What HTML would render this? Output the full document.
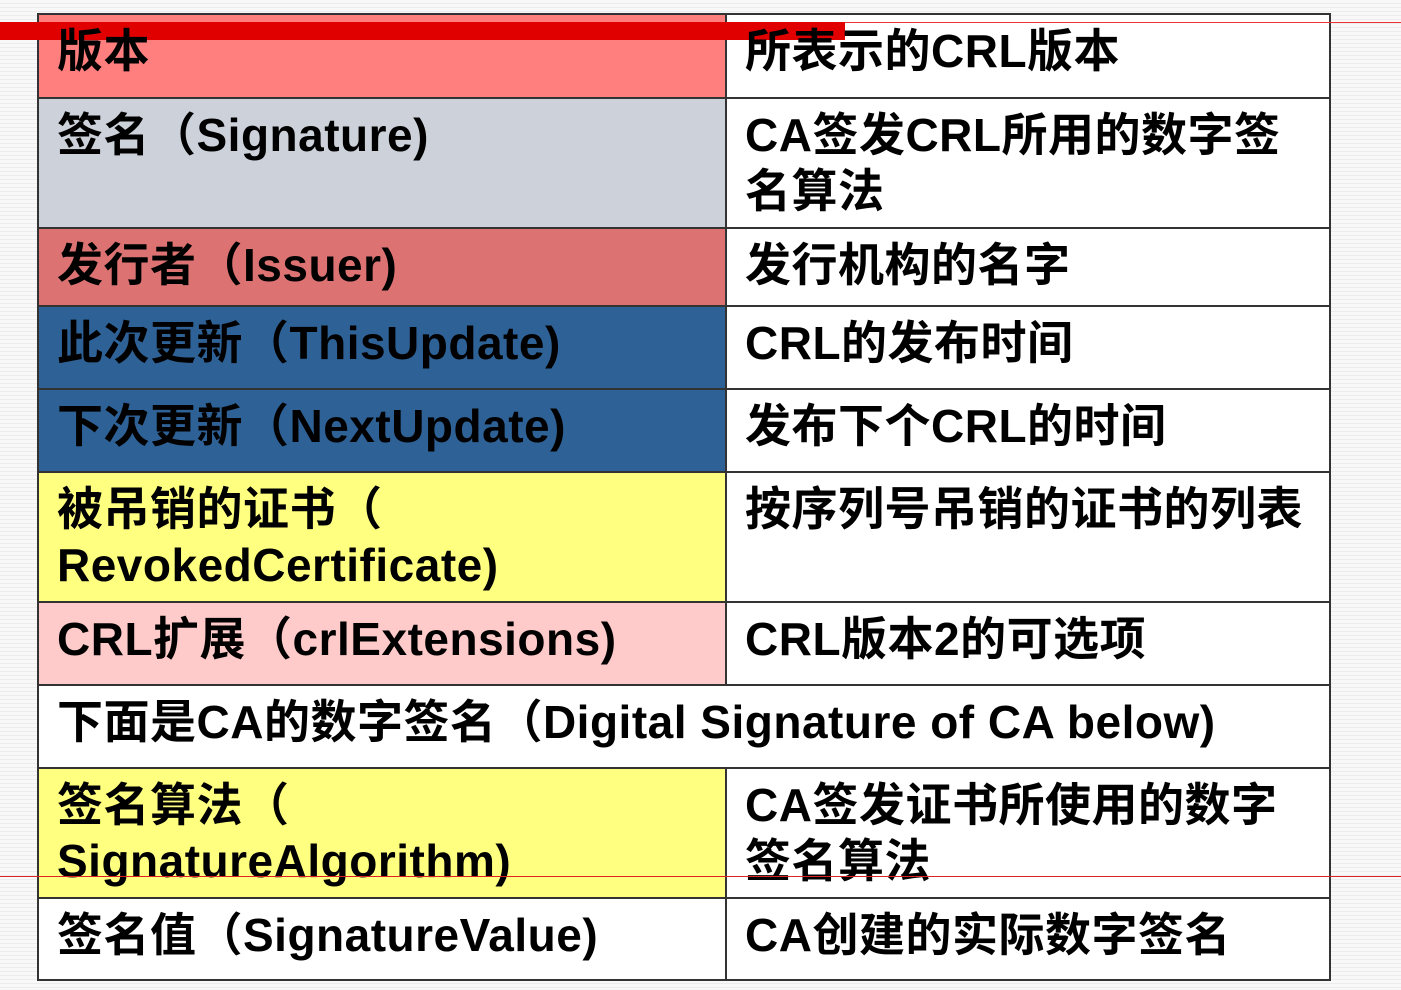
<!DOCTYPE html>
<html><head><meta charset="utf-8"><style>
body{margin:0;width:1401px;height:990px;background:#f5f5f5;position:relative;overflow:hidden;
background-image:repeating-linear-gradient(#f8f8f8 0 3px,#ececec 3px 4px);}
.c{position:absolute;box-sizing:border-box;font-family:"Liberation Sans","Noto Sans CJK SC",sans-serif;font-weight:bold;font-size:46px;line-height:56px;color:#000;padding:8px 0 0 18px;border:2px solid #333;letter-spacing:0.5px;white-space:nowrap}
.l{left:37px;width:690px}
.r{left:725px;width:606px;background:#fff}
</style></head><body>
<div class="c l" style="top:13px;height:86px;background:#ff7f7f"></div>
<div class="c r" style="top:13px;height:86px;background:#fff"></div>
<div style="position:absolute;left:0;top:22px;width:845px;height:18px;background:#e00000;z-index:2"></div>
<div style="position:absolute;left:845px;top:22px;width:556px;height:1px;background:#e33;z-index:2"></div>
<div class="c l" style="top:13px;height:86px;background:transparent;border-color:transparent;z-index:10">版本</div>
<div class="c r" style="top:13px;height:86px;background:transparent;border-color:transparent;z-index:10">所表示的CRL版本</div>
<div class="c l" style="top:97px;height:132px;background:#cdd2da">签名（Signature)</div>
<div class="c r" style="top:97px;height:132px">CA签发CRL所用的数字签<br>名算法</div>
<div class="c l" style="top:227px;height:80px;background:#dd7272">发行者（Issuer)</div>
<div class="c r" style="top:227px;height:80px">发行机构的名字</div>
<div class="c l" style="top:305px;height:85px;background:#2e6196">此次更新（ThisUpdate)</div>
<div class="c r" style="top:305px;height:85px">CRL的发布时间</div>
<div class="c l" style="top:388px;height:85px;background:#2e6196">下次更新（NextUpdate)</div>
<div class="c r" style="top:388px;height:85px">发布下个CRL的时间</div>
<div class="c l" style="top:471px;height:132px;background:#ffff80">被吊销的证书（<br>RevokedCertificate)</div>
<div class="c r" style="top:471px;height:132px">按序列号吊销的证书的列表</div>
<div class="c l" style="top:601px;height:85px;background:#ffcaca">CRL扩展（crlExtensions)</div>
<div class="c r" style="top:601px;height:85px">CRL版本2的可选项</div>
<div class="c" style="left:37px;width:1294px;top:684px;height:85px;background:#fff">下面是CA的数字签名（Digital Signature of CA below)</div>
<div class="c l" style="top:767px;height:132px;background:#ffff80">签名算法（<br>SignatureAlgorithm)</div>
<div class="c r" style="top:767px;height:132px">CA签发证书所使用的数字<br>签名算法</div>
<div class="c l" style="top:897px;height:84px;background:#fff">签名值（SignatureValue)</div>
<div class="c r" style="top:897px;height:84px">CA创建的实际数字签名</div>
<div style="position:absolute;left:0;top:876px;width:1401px;height:1px;background:#d22;z-index:3"></div>
</body></html>
